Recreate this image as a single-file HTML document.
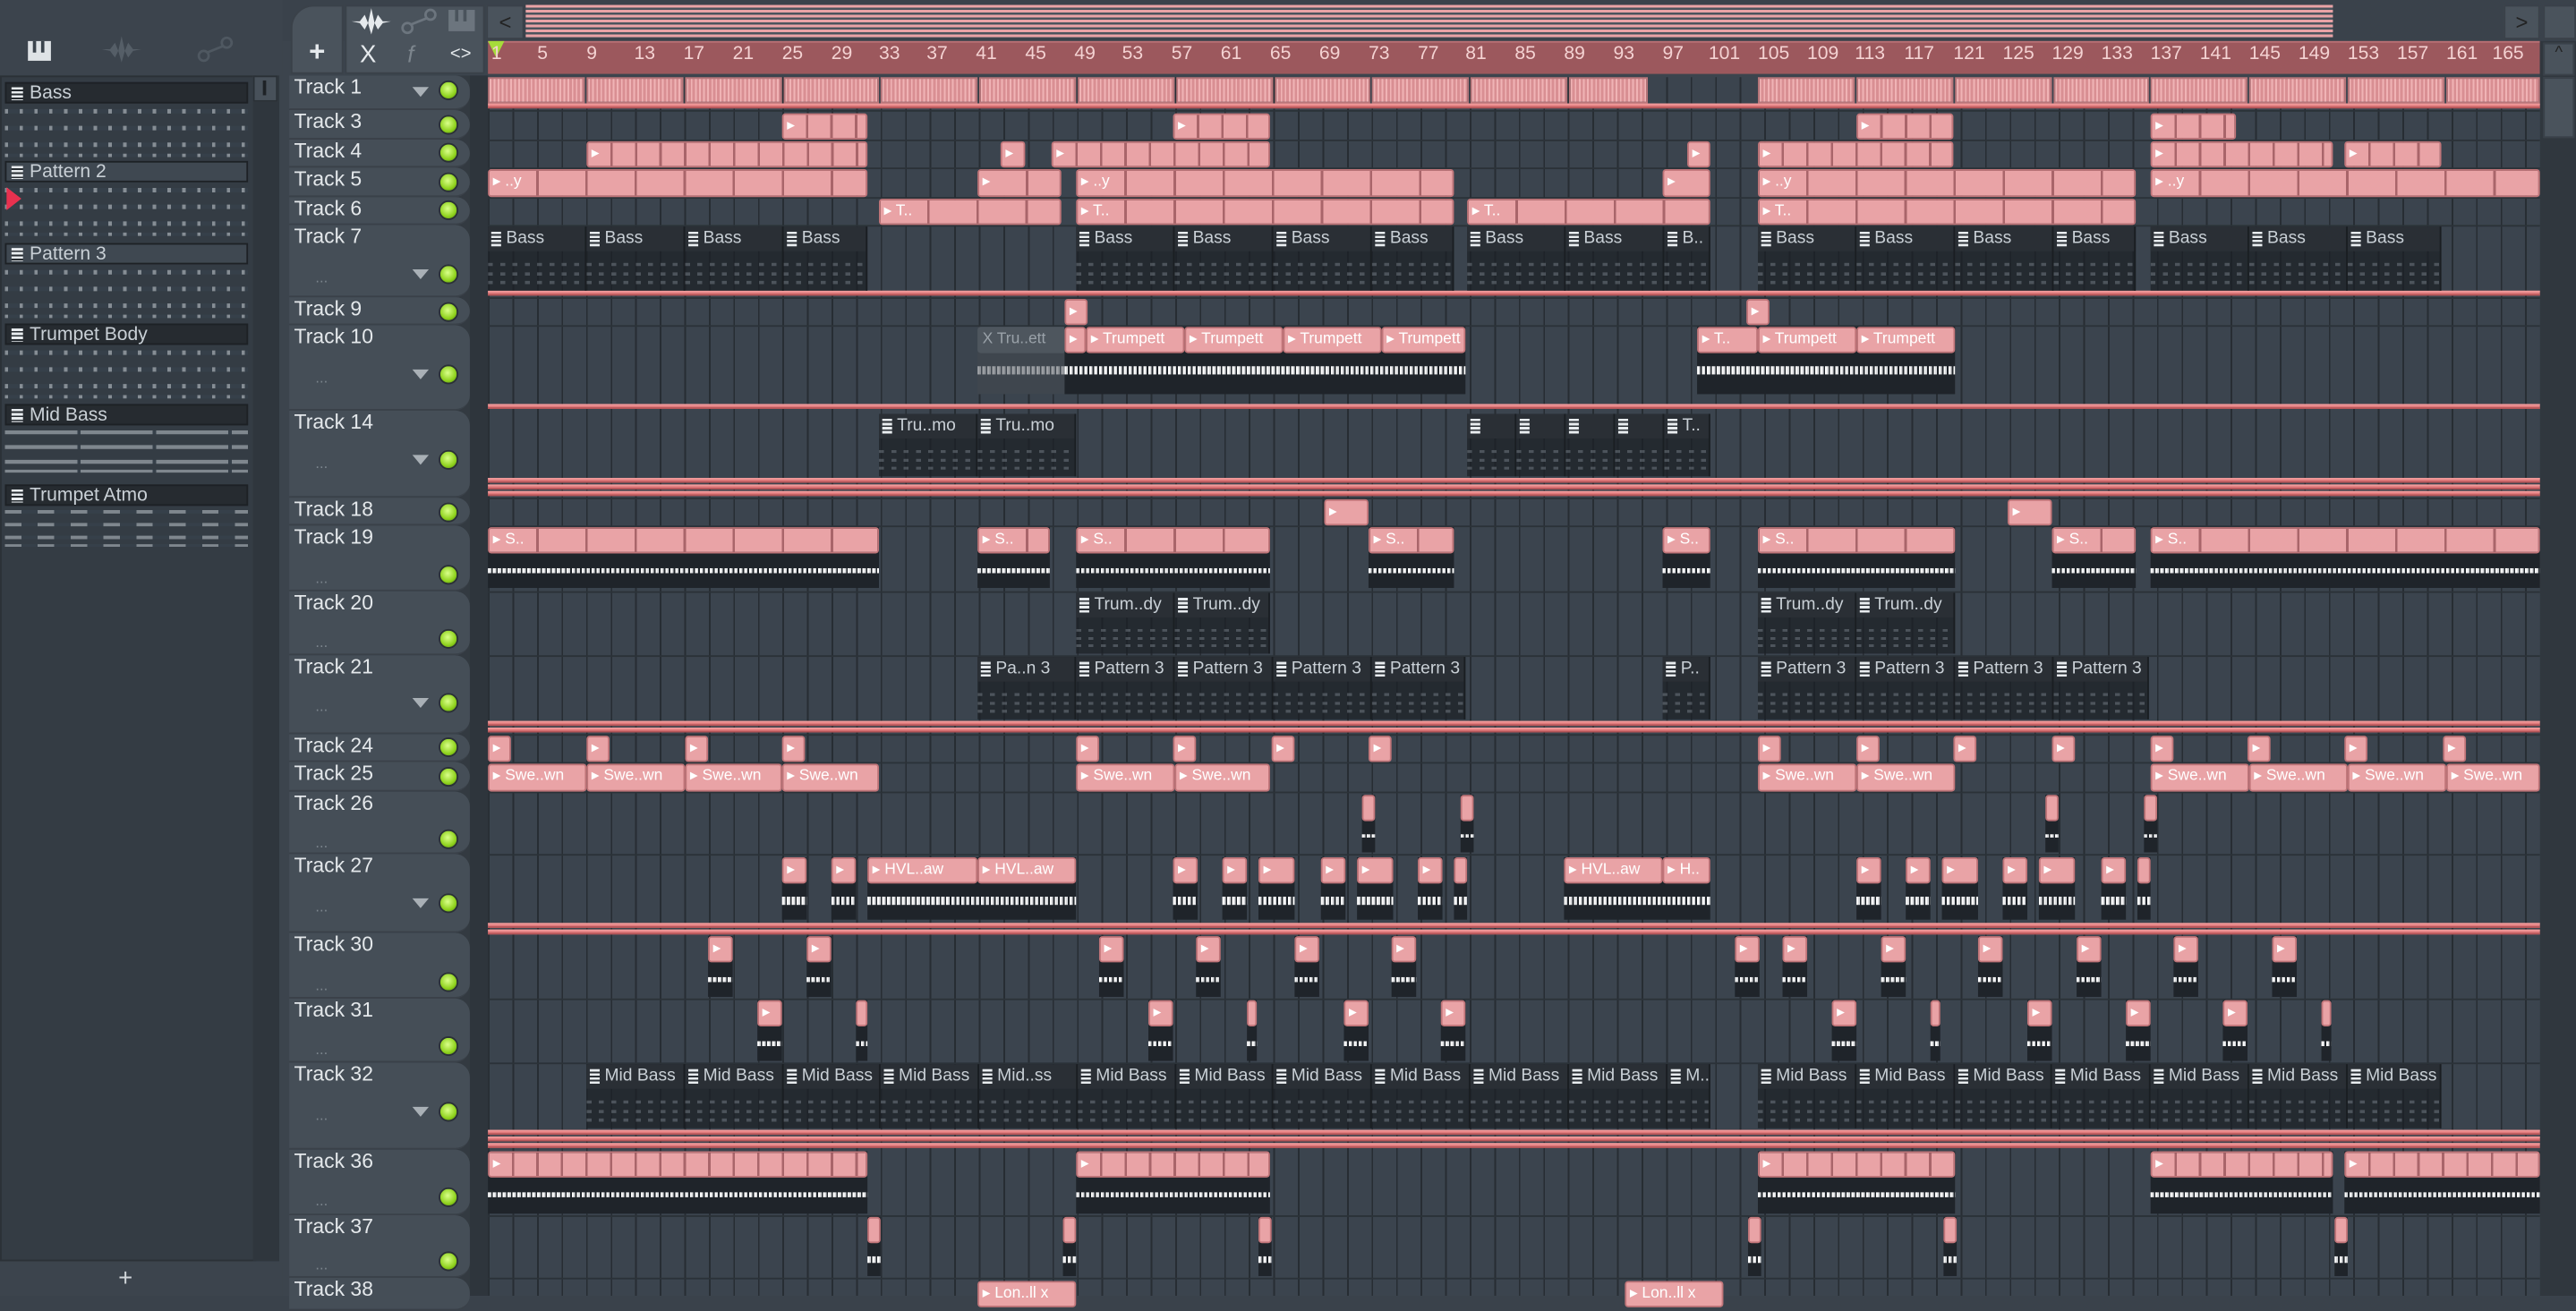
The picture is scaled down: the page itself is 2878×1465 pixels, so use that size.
<!DOCTYPE html>
<html><head><meta charset="utf-8">
<style>
*{margin:0;padding:0;box-sizing:border-box}
html,body{width:2878px;height:1448px;overflow:hidden;background:#3a424b}
#r{position:absolute;left:0;top:0;width:1568px;height:789px;transform:scale(1.8355,1.8352);transform-origin:0 0;background:#3c444d;font-family:"Liberation Sans Narrow","Liberation Sans",sans-serif;color:#dfe3e6}
.ab{position:absolute}
#grid{position:absolute;left:297px;top:47px;width:1249px;height:742px;background:#3b444e;
 background-image:repeating-linear-gradient(90deg,#272d33 0 1px,transparent 1px 14.94px);}
.row{position:absolute;left:297px;width:1249px;height:1px;background:#2b3238}
.red{position:absolute;left:297px;width:1249px;height:3px;background:#e07b7d;border-top:1px solid #f09a9a;border-bottom:1px solid #b55558}
.th{position:absolute;left:176px;width:110px;background:#454e57;border-radius:0 9px 9px 0;border-bottom:1px solid #3a4149}
.th span{position:absolute;left:3px;top:0;font-size:12.5px;color:#e4e8eb}
.dot{position:absolute;left:267px;width:12px;height:12px;border-radius:50%;background:radial-gradient(circle at 45% 40%,#d9ff8a,#8fd21d 60%,#4a7d0f);border:1.5px solid #2a3036}
.tri{position:absolute;left:251px;width:0;height:0;border-left:5px solid transparent;border-right:5px solid transparent;border-top:6px solid #a9b0b6}
.dd{position:absolute;left:192px;font-size:9px;color:#7c858d}
.p{position:absolute;background:#e9a3a6;border:1px solid #c07579;border-radius:2px;color:#fff;font-size:9.5px;line-height:13px;overflow:hidden;white-space:nowrap;padding-left:2px}
.r15{background:repeating-linear-gradient(90deg,#e9a3a6 0 13.5px,#a9656a 13.5px 14.94px)!important}
.r30{background:repeating-linear-gradient(90deg,#e9a3a6 0 28.4px,#a9656a 28.4px 29.88px)!important}
.r60{background:repeating-linear-gradient(90deg,#e9a3a6 0 58.3px,#a9656a 58.3px 59.76px)!important}
.q{position:absolute;background:rgba(28,32,37,.72);overflow:hidden;white-space:nowrap;border-right:1px solid #1a1e22}
.q b{display:block;height:15px;background:#2a2f35;font-weight:normal;font-size:10.5px;line-height:15px;color:#c9d0d6;padding-left:11px;position:relative}
.q b:before{content:"";position:absolute;left:2px;top:3px;width:6px;height:9px;background:repeating-linear-gradient(#e8ecef 0 1.5px,#2a2f35 1.5px 2.5px)}
.qn{position:absolute;left:0;right:0;top:22px;bottom:4px;background:repeating-linear-gradient(90deg,rgba(160,170,180,.55) 0 3px,transparent 3px 7.5px);opacity:.6;clip-path:polygon(0 0,100% 0,100% 15%,0 15%,0 45%,100% 45%,100% 60%,0 60%,0 85%,100% 85%,100% 100%,0 100%)}
.au{position:absolute;background:#1f242a}
.au b{position:absolute;left:0;right:0;top:0;height:16px;background:#e9a3a6;border:1px solid #c07579;border-radius:2px;font-weight:normal;color:#fff;font-size:9.5px;line-height:13px;padding-left:2px;overflow:hidden;white-space:nowrap}
.au s{position:absolute;left:0;right:0;height:5px;background:repeating-linear-gradient(90deg,#fff 0 1px,#d8dadc 1px 2px,transparent 2px 3px)}
.lp{position:absolute;left:3px;width:148px;height:13px;background:#262b30;border:1px solid #1d2125;font-size:11.5px;line-height:12px;color:#c9d0d6;padding-left:14px}
.lp:before{content:"";position:absolute;left:3px;top:2px;width:7px;height:8px;background:repeating-linear-gradient(#e8ecef 0 1.5px,#262b30 1.5px 2.5px)}
.ln{position:absolute;left:3px;width:148px;height:34px;background:#36404a;background-image:repeating-linear-gradient(90deg,rgba(200,205,210,.55) 0 2px,transparent 2px 9px);clip-path:polygon(0 10%,100% 10%,100% 18%,0 18%,0 40%,100% 40%,100% 48%,0 48%,0 70%,100% 70%,100% 78%,0 78%,0 90%,100% 90%,100% 96%,0 96%)}
.ru{position:absolute;top:27px;font-size:11.5px;color:#f4d2d2}
.t1{position:absolute;top:47px;height:16px;border:1px solid #b9767a;background:repeating-linear-gradient(90deg,#f0b3b5 0 1px,#d98f93 1px 2.5px)}
</style></head><body><div id="r">

<div class="ab" style="left:0;top:0;width:172px;height:46px;background:#3c444d"></div>
<div class="ab" style="left:17px;top:25px;width:14px;height:12px;background:#dfe3e6"></div>
<div class="ab" style="left:20px;top:25px;width:2px;height:7px;background:#3c444d"></div>
<div class="ab" style="left:25px;top:25px;width:2px;height:7px;background:#3c444d"></div>
<svg class="ab" style="left:62px;top:22px" width="24" height="16"><path d="M0 8 L5 8 L8 4 L10 9 L12 0 L14 9 L16 4 L19 8 L24 8 L19 9 L16 13 L14 9 L12 16 L10 9 L8 13 L5 9Z" fill="#555e67"/></svg>
<svg class="ab" style="left:120px;top:22px" width="22" height="16"><circle cx="4" cy="12" r="3" fill="none" stroke="#4f5861" stroke-width="1.5"/><circle cx="18" cy="4" r="3" fill="none" stroke="#4f5861" stroke-width="1.5"/><path d="M6 10L16 6" stroke="#4f5861" stroke-width="1.5"/></svg>

<div class="ab" style="left:0;top:46px;width:156px;height:722px;background:#343c44;border:1px solid #2b3137"></div>
<div class="ab" style="left:154px;top:46px;width:16px;height:722px;background:#2f363d"></div>
<div class="ab" style="left:154px;top:46px;width:15px;height:16px;background:#48515a;border:1px solid #2a3036"></div>
<div class="ab" style="left:160px;top:49px;width:2px;height:9px;background:#1e2226"></div>
<div class="lp" style="top:50px">Bass</div><div class="ln" style="top:63px"></div>
<div class="lp" style="top:98px;background:#3f4851">Pattern 2</div><div class="ln" style="top:111px"></div>
<div class="ab" style="left:4px;top:114px;width:0;height:0;border-top:7px solid transparent;border-bottom:7px solid transparent;border-left:9px solid #e8314f"></div>
<div class="lp" style="top:148px;background:#3f4851">Pattern 3</div><div class="ln" style="top:161px"></div>
<div class="lp" style="top:197px">Trumpet Body</div><div class="ln" style="top:210px"></div>
<div class="lp" style="top:246px">Mid Bass</div><div class="ln" style="top:259px;height:30px;background-image:repeating-linear-gradient(90deg,rgba(200,205,210,.5) 0 44px,transparent 44px 46px)"></div>
<div class="lp" style="top:295px">Trumpet Atmo</div><div class="ln" style="top:308px;height:26px;background-image:repeating-linear-gradient(90deg,rgba(200,205,210,.5) 0 10px,transparent 10px 20px)"></div>
<div class="ab" style="left:0;top:769px;width:172px;height:20px;background:#3c444d"></div>
<div class="ab" style="left:72px;top:770px;font-size:15px;color:#d0d5d9">+</div>

<div class="ab" style="left:172px;top:0;width:1396px;height:25px;background:#3a424b"></div>
<div class="ab" style="left:177px;top:3px;width:32px;height:42px;background:#4a535c;border:1px solid #3a4149;border-radius:14px 0 0 0"></div>
<div class="ab" style="left:188px;top:22px;font-size:17px;font-weight:bold;color:#e6eaed">+</div>
<div class="ab" style="left:210px;top:3px;width:85px;height:42px;background:#4a535c;border:1px solid #3a4149"></div>
<svg class="ab" style="left:214px;top:5px" width="24" height="16"><path d="M0 8 L5 8 L8 4 L10 9 L12 0 L14 9 L16 4 L19 8 L24 8 L19 9 L16 13 L14 9 L12 16 L10 9 L8 13 L5 9Z" fill="#e6eaed"/></svg>
<svg class="ab" style="left:244px;top:5px" width="22" height="16"><circle cx="4" cy="12" r="3" fill="none" stroke="#6c757e" stroke-width="1.5"/><circle cx="18" cy="4" r="3" fill="none" stroke="#6c757e" stroke-width="1.5"/><path d="M6 10L16 6" stroke="#6c757e" stroke-width="1.5"/></svg>
<div class="ab" style="left:273px;top:6px;width:16px;height:13px;background:#6c757e"></div>
<div class="ab" style="left:277px;top:6px;width:2px;height:7px;background:#4a535c"></div><div class="ab" style="left:282px;top:6px;width:2px;height:7px;background:#4a535c"></div>
<div class="ab" style="left:219px;top:25px;font-size:15px;color:#e6eaed">X</div>
<div class="ab" style="left:248px;top:25px;font-size:14px;color:#7c858d;font-style:italic">f</div>
<div class="ab" style="left:274px;top:27px;font-size:11px;color:#e6eaed">&lt;&gt;</div>
<div class="ab" style="left:296px;top:3px;width:23px;height:21px;background:#4a535c;border:1px solid #3a4149;color:#222;font-size:13px;text-align:center;line-height:19px">&lt;</div>
<div class="ab" style="left:320px;top:3px;width:1100px;height:20px;background:#4b545d;background-image:repeating-linear-gradient(#e9a3a6 0 1.5px,transparent 1.5px 3px)"></div>
<div class="ab" style="left:1524px;top:3px;width:22px;height:21px;background:#4a535c;border:1px solid #3a4149;color:#222;font-size:13px;text-align:center;line-height:19px">&gt;</div>
<div class="ab" style="left:1548px;top:3px;width:20px;height:21px;background:#4a535c;border:1px solid #3a4149"></div>

<div class="ab" style="left:297px;top:25px;width:1249px;height:20px;background:#9c585d;border-top:1px solid #b87074"></div>
<div class="ab" style="left:297px;top:25px;width:0;height:0;border-left:5px solid transparent;border-right:5px solid transparent;border-top:10px solid #a6dc3a"></div>
<div class="ru" style="left:299px">1</div><div class="ru" style="left:327px">5</div><div class="ru" style="left:357px">9</div><div class="ru" style="left:386px">13</div><div class="ru" style="left:416px">17</div><div class="ru" style="left:446px">21</div><div class="ru" style="left:476px">25</div><div class="ru" style="left:506px">29</div><div class="ru" style="left:535px">33</div><div class="ru" style="left:564px">37</div><div class="ru" style="left:594px">41</div><div class="ru" style="left:624px">45</div><div class="ru" style="left:654px">49</div><div class="ru" style="left:683px">53</div><div class="ru" style="left:713px">57</div><div class="ru" style="left:743px">61</div><div class="ru" style="left:773px">65</div><div class="ru" style="left:803px">69</div><div class="ru" style="left:833px">73</div><div class="ru" style="left:863px">77</div><div class="ru" style="left:892px">81</div><div class="ru" style="left:922px">85</div><div class="ru" style="left:952px">89</div><div class="ru" style="left:982px">93</div><div class="ru" style="left:1012px">97</div><div class="ru" style="left:1040px">101</div><div class="ru" style="left:1070px">105</div><div class="ru" style="left:1100px">109</div><div class="ru" style="left:1129px">113</div><div class="ru" style="left:1159px">117</div><div class="ru" style="left:1189px">121</div><div class="ru" style="left:1219px">125</div><div class="ru" style="left:1249px">129</div><div class="ru" style="left:1279px">133</div><div class="ru" style="left:1309px">137</div><div class="ru" style="left:1339px">141</div><div class="ru" style="left:1369px">145</div><div class="ru" style="left:1399px">149</div><div class="ru" style="left:1429px">153</div><div class="ru" style="left:1459px">157</div><div class="ru" style="left:1489px">161</div><div class="ru" style="left:1517px">165</div>

<div class="ab" style="left:1546px;top:25px;width:22px;height:764px;background:#30373e"></div>
<div class="ab" style="left:1548px;top:26px;width:19px;height:20px;background:#4a535c;border:1px solid #3a4149;font-size:10px;text-align:center;color:#222">^</div>
<div class="ab" style="left:1548px;top:47px;width:19px;height:37px;background:#4a535c;border:1px solid #3a4149"></div>

<div class="ab" style="left:176px;top:46px;width:121px;height:743px;background:#333a41"></div>
<div class="ab" style="left:286px;top:46px;width:11px;height:743px;background:#2e353c"></div>

<div id="grid"></div>
<div class="row" style="top:67px"></div><div class="row" style="top:85px"></div><div class="row" style="top:102px"></div><div class="row" style="top:120px"></div><div class="row" style="top:137px"></div><div class="row" style="top:181px"></div><div class="row" style="top:198px"></div><div class="row" style="top:303px"></div><div class="row" style="top:320px"></div><div class="row" style="top:360px"></div><div class="row" style="top:399px"></div><div class="row" style="top:447px"></div><div class="row" style="top:464px"></div><div class="row" style="top:482px"></div><div class="row" style="top:520px"></div><div class="row" style="top:608px"></div><div class="row" style="top:647px"></div><div class="row" style="top:740px"></div><div class="row" style="top:778px"></div>
<div class="red" style="top:63px"></div>
<div class="red" style="top:177px"></div>
<div class="red" style="top:246px"></div>
<div class="red" style="top:291px"></div><div class="red" style="top:295px"></div><div class="red" style="top:299px"></div>
<div class="red" style="top:439px"></div><div class="red" style="top:443px"></div>
<div class="red" style="top:562px"></div><div class="red" style="top:566px"></div>
<div class="red" style="top:688px"></div><div class="red" style="top:692px"></div><div class="red" style="top:696px"></div>

<div class="th" style="top:46px;height:21px"><span>Track 1</span></div><div class="tri" style="top:53px"></div><div class="dot" style="top:49px"></div>
<div class="th" style="top:67px;height:18px"><span>Track 3</span></div><div class="dot" style="top:70px"></div>
<div class="th" style="top:85px;height:17px"><span>Track 4</span></div><div class="dot" style="top:87px"></div>
<div class="th" style="top:102px;height:18px"><span>Track 5</span></div><div class="dot" style="top:105px"></div>
<div class="th" style="top:120px;height:17px"><span>Track 6</span></div><div class="dot" style="top:122px"></div>
<div class="th" style="top:137px;height:44px"><span>Track 7</span></div><div class="tri" style="top:164px"></div><div class="dd" style="top:164px">...</div><div class="dot" style="top:161px"></div>
<div class="th" style="top:181px;height:17px"><span>Track 9</span></div><div class="dot" style="top:184px"></div>
<div class="th" style="top:198px;height:52px"><span>Track 10</span></div><div class="tri" style="top:225px"></div><div class="dd" style="top:225px">...</div><div class="dot" style="top:222px"></div>
<div class="th" style="top:250px;height:53px"><span>Track 14</span></div><div class="tri" style="top:277px"></div><div class="dd" style="top:277px">...</div><div class="dot" style="top:274px"></div>
<div class="th" style="top:303px;height:17px"><span>Track 18</span></div><div class="dot" style="top:306px"></div>
<div class="th" style="top:320px;height:40px"><span>Track 19</span></div><div class="dd" style="top:347px">...</div><div class="dot" style="top:344px"></div>
<div class="th" style="top:360px;height:39px"><span>Track 20</span></div><div class="dd" style="top:386px">...</div><div class="dot" style="top:383px"></div>
<div class="th" style="top:399px;height:48px"><span>Track 21</span></div><div class="tri" style="top:425px"></div><div class="dd" style="top:425px">...</div><div class="dot" style="top:422px"></div>
<div class="th" style="top:447px;height:17px"><span>Track 24</span></div><div class="dot" style="top:449px"></div>
<div class="th" style="top:464px;height:18px"><span>Track 25</span></div><div class="dot" style="top:467px"></div>
<div class="th" style="top:482px;height:38px"><span>Track 26</span></div><div class="dd" style="top:508px">...</div><div class="dot" style="top:505px"></div>
<div class="th" style="top:520px;height:48px"><span>Track 27</span></div><div class="tri" style="top:547px"></div><div class="dd" style="top:547px">...</div><div class="dot" style="top:544px"></div>
<div class="th" style="top:568px;height:40px"><span>Track 30</span></div><div class="dd" style="top:595px">...</div><div class="dot" style="top:592px"></div>
<div class="th" style="top:608px;height:39px"><span>Track 31</span></div><div class="dd" style="top:634px">...</div><div class="dot" style="top:631px"></div>
<div class="th" style="top:647px;height:53px"><span>Track 32</span></div><div class="tri" style="top:674px"></div><div class="dd" style="top:674px">...</div><div class="dot" style="top:671px"></div>
<div class="th" style="top:700px;height:40px"><span>Track 36</span></div><div class="dd" style="top:726px">...</div><div class="dot" style="top:723px"></div>
<div class="th" style="top:740px;height:38px"><span>Track 37</span></div><div class="dd" style="top:765px">...</div><div class="dot" style="top:762px"></div>
<div class="th" style="top:778px;height:20px"><span>Track 38</span></div>

<!-- Track 1 -->
<div class="t1" style="left:297px;width:59px"></div><div class="t1" style="left:357px;width:59px"></div><div class="t1" style="left:417px;width:59px"></div><div class="t1" style="left:477px;width:58px"></div><div class="t1" style="left:536px;width:59px"></div><div class="t1" style="left:596px;width:59px"></div><div class="t1" style="left:656px;width:59px"></div><div class="t1" style="left:716px;width:59px"></div><div class="t1" style="left:776px;width:58px"></div><div class="t1" style="left:835px;width:59px"></div><div class="t1" style="left:895px;width:59px"></div><div class="t1" style="left:955px;width:48px"></div>
<div class="t1" style="left:1070px;width:59px"></div><div class="t1" style="left:1130px;width:59px"></div><div class="t1" style="left:1190px;width:59px"></div><div class="t1" style="left:1250px;width:58px"></div><div class="t1" style="left:1309px;width:59px"></div><div class="t1" style="left:1369px;width:59px"></div><div class="t1" style="left:1429px;width:59px"></div><div class="t1" style="left:1489px;width:57px"></div>

<!-- Track 3 -->
<div class="p r15" style="left:476px;top:69px;width:52px;height:16px">▸</div>
<div class="p r15" style="left:714px;top:69px;width:59px;height:16px">▸</div>
<div class="p r15" style="left:1130px;top:69px;width:59px;height:16px">▸</div>
<div class="p r15" style="left:1309px;top:69px;width:52px;height:16px">▸</div>
<!-- Track 4 -->
<div class="p r15" style="left:357px;top:86px;width:171px;height:16px">▸</div>
<div class="p" style="left:609px;top:86px;width:15px;height:16px">▸</div>
<div class="p r15" style="left:640px;top:86px;width:133px;height:16px">▸</div>
<div class="p" style="left:1027px;top:86px;width:14px;height:16px">▸</div>
<div class="p r15" style="left:1070px;top:86px;width:119px;height:16px">▸</div>
<div class="p r15" style="left:1309px;top:86px;width:111px;height:16px">▸</div>
<div class="p r15" style="left:1427px;top:86px;width:59px;height:16px">▸</div>
<!-- Track 5 -->
<div class="p r30" style="left:297px;top:103px;width:231px;height:17px">▸ ..y</div>
<div class="p r30" style="left:595px;top:103px;width:51px;height:17px">▸</div>
<div class="p r30" style="left:655px;top:103px;width:230px;height:17px">▸ ..y</div>
<div class="p" style="left:1012px;top:103px;width:29px;height:17px">▸</div>
<div class="p r30" style="left:1070px;top:103px;width:230px;height:17px">▸ ..y</div>
<div class="p r30" style="left:1309px;top:103px;width:237px;height:17px">▸ ..y</div>
<!-- Track 6 -->
<div class="p r30" style="left:535px;top:121px;width:111px;height:16px">▸ T..</div>
<div class="p r30" style="left:655px;top:121px;width:230px;height:16px">▸ T..</div>
<div class="p r30" style="left:893px;top:121px;width:148px;height:16px">▸ T..</div>
<div class="p r30" style="left:1070px;top:121px;width:230px;height:16px">▸ T..</div>
<!-- Track 7 -->
<div class="q" style="left:297px;top:138px;width:60px;height:39px"><b>Bass</b><i class="qn"></i></div><div class="q" style="left:357px;top:138px;width:60px;height:39px"><b>Bass</b><i class="qn"></i></div><div class="q" style="left:417px;top:138px;width:60px;height:39px"><b>Bass</b><i class="qn"></i></div><div class="q" style="left:477px;top:138px;width:51px;height:39px"><b>Bass</b><i class="qn"></i></div>
<div class="q" style="left:655px;top:138px;width:60px;height:39px"><b>Bass</b><i class="qn"></i></div><div class="q" style="left:715px;top:138px;width:60px;height:39px"><b>Bass</b><i class="qn"></i></div><div class="q" style="left:775px;top:138px;width:60px;height:39px"><b>Bass</b><i class="qn"></i></div><div class="q" style="left:835px;top:138px;width:50px;height:39px"><b>Bass</b><i class="qn"></i></div>
<div class="q" style="left:893px;top:138px;width:60px;height:39px"><b>Bass</b><i class="qn"></i></div><div class="q" style="left:953px;top:138px;width:60px;height:39px"><b>Bass</b><i class="qn"></i></div><div class="q" style="left:1013px;top:138px;width:28px;height:39px"><b>B..</b><i class="qn"></i></div>
<div class="q" style="left:1070px;top:138px;width:60px;height:39px"><b>Bass</b><i class="qn"></i></div><div class="q" style="left:1130px;top:138px;width:60px;height:39px"><b>Bass</b><i class="qn"></i></div><div class="q" style="left:1190px;top:138px;width:60px;height:39px"><b>Bass</b><i class="qn"></i></div><div class="q" style="left:1250px;top:138px;width:50px;height:39px"><b>Bass</b><i class="qn"></i></div>
<div class="q" style="left:1309px;top:138px;width:60px;height:39px"><b>Bass</b><i class="qn"></i></div><div class="q" style="left:1369px;top:138px;width:60px;height:39px"><b>Bass</b><i class="qn"></i></div><div class="q" style="left:1429px;top:138px;width:57px;height:39px"><b>Bass</b><i class="qn"></i></div>
<!-- Track 9 -->
<div class="p" style="left:648px;top:182px;width:14px;height:16px">▸</div>
<div class="p" style="left:1063px;top:182px;width:14px;height:16px">▸</div>
<!-- Track 10 -->
<div class="au" style="left:595px;top:199px;width:54px;height:41px;background:#3f464e"><b style="background:#4e565e;border-color:#4e565e;color:#9aa2a9">X Tru..ett</b><s style="top:24px;opacity:.5"></s></div>
<div class="au" style="left:648px;top:199px;width:244px;height:41px"><s style="top:24px"></s></div>
<div class="p" style="left:648px;top:199px;width:13px;height:16px">▸</div>
<div class="p" style="left:661px;top:199px;width:60px;height:16px">▸ Trumpett</div><div class="p" style="left:721px;top:199px;width:60px;height:16px">▸ Trumpett</div><div class="p" style="left:781px;top:199px;width:60px;height:16px">▸ Trumpett</div><div class="p" style="left:841px;top:199px;width:51px;height:16px">▸ Trumpett</div>
<div class="au" style="left:1033px;top:199px;width:157px;height:41px"><s style="top:24px"></s></div>
<div class="p" style="left:1033px;top:199px;width:37px;height:16px">▸ T..</div><div class="p" style="left:1070px;top:199px;width:60px;height:16px">▸ Trumpett</div><div class="p" style="left:1130px;top:199px;width:60px;height:16px">▸ Trumpett</div>
<!-- Track 14 -->
<div class="q" style="left:535px;top:252px;width:60px;height:38px"><b>Tru..mo</b><i class="qn"></i></div><div class="q" style="left:595px;top:252px;width:60px;height:38px"><b>Tru..mo</b><i class="qn"></i></div>
<div class="q" style="left:893px;top:252px;width:30px;height:38px"><b></b><i class="qn"></i></div><div class="q" style="left:923px;top:252px;width:30px;height:38px"><b></b><i class="qn"></i></div><div class="q" style="left:953px;top:252px;width:30px;height:38px"><b></b><i class="qn"></i></div><div class="q" style="left:983px;top:252px;width:30px;height:38px"><b></b><i class="qn"></i></div><div class="q" style="left:1013px;top:252px;width:28px;height:38px"><b>T..</b><i class="qn"></i></div>
<!-- Track 18 -->
<div class="p" style="left:806px;top:304px;width:27px;height:16px">▸</div>
<div class="p" style="left:1222px;top:304px;width:27px;height:16px">▸</div>
<!-- Track 19 -->
<div class="au" style="left:297px;top:321px;width:238px;height:37px"><b class="r30">▸ S..</b><s style="top:25px;height:3px"></s></div>
<div class="au" style="left:595px;top:321px;width:44px;height:37px"><b class="r30">▸ S..</b><s style="top:25px;height:3px"></s></div>
<div class="au" style="left:655px;top:321px;width:118px;height:37px"><b class="r30">▸ S..</b><s style="top:25px;height:3px"></s></div>
<div class="au" style="left:833px;top:321px;width:52px;height:37px"><b class="r30">▸ S..</b><s style="top:25px;height:3px"></s></div>
<div class="au" style="left:1012px;top:321px;width:29px;height:37px"><b>▸ S..</b><s style="top:25px;height:3px"></s></div>
<div class="au" style="left:1070px;top:321px;width:120px;height:37px"><b class="r30">▸ S..</b><s style="top:25px;height:3px"></s></div>
<div class="au" style="left:1249px;top:321px;width:51px;height:37px"><b class="r30">▸ S..</b><s style="top:25px;height:3px"></s></div>
<div class="au" style="left:1309px;top:321px;width:237px;height:37px"><b class="r30">▸ S..</b><s style="top:25px;height:3px"></s></div>
<!-- Track 20 -->
<div class="q" style="left:655px;top:361px;width:60px;height:37px"><b>Trum..dy</b><i class="qn"></i></div><div class="q" style="left:715px;top:361px;width:58px;height:37px"><b>Trum..dy</b><i class="qn"></i></div>
<div class="q" style="left:1070px;top:361px;width:60px;height:37px"><b>Trum..dy</b><i class="qn"></i></div><div class="q" style="left:1130px;top:361px;width:60px;height:37px"><b>Trum..dy</b><i class="qn"></i></div>
<!-- Track 21 -->
<div class="q" style="left:595px;top:400px;width:60px;height:38px"><b>Pa..n 3</b><i class="qn"></i></div><div class="q" style="left:655px;top:400px;width:60px;height:38px"><b>Pattern 3</b><i class="qn"></i></div><div class="q" style="left:715px;top:400px;width:60px;height:38px"><b>Pattern 3</b><i class="qn"></i></div><div class="q" style="left:775px;top:400px;width:60px;height:38px"><b>Pattern 3</b><i class="qn"></i></div><div class="q" style="left:835px;top:400px;width:57px;height:38px"><b>Pattern 3</b><i class="qn"></i></div>
<div class="q" style="left:1012px;top:400px;width:29px;height:38px"><b>P..</b><i class="qn"></i></div>
<div class="q" style="left:1070px;top:400px;width:60px;height:38px"><b>Pattern 3</b><i class="qn"></i></div><div class="q" style="left:1130px;top:400px;width:60px;height:38px"><b>Pattern 3</b><i class="qn"></i></div><div class="q" style="left:1190px;top:400px;width:60px;height:38px"><b>Pattern 3</b><i class="qn"></i></div><div class="q" style="left:1250px;top:400px;width:58px;height:38px"><b>Pattern 3</b><i class="qn"></i></div>
<!-- Track 24 -->
<div class="p" style="left:297px;top:448px;width:14px;height:16px">▸</div><div class="p" style="left:357px;top:448px;width:14px;height:16px">▸</div><div class="p" style="left:417px;top:448px;width:14px;height:16px">▸</div><div class="p" style="left:476px;top:448px;width:14px;height:16px">▸</div><div class="p" style="left:655px;top:448px;width:14px;height:16px">▸</div><div class="p" style="left:714px;top:448px;width:14px;height:16px">▸</div><div class="p" style="left:774px;top:448px;width:14px;height:16px">▸</div><div class="p" style="left:833px;top:448px;width:14px;height:16px">▸</div><div class="p" style="left:1070px;top:448px;width:14px;height:16px">▸</div><div class="p" style="left:1130px;top:448px;width:14px;height:16px">▸</div><div class="p" style="left:1189px;top:448px;width:14px;height:16px">▸</div><div class="p" style="left:1249px;top:448px;width:14px;height:16px">▸</div><div class="p" style="left:1309px;top:448px;width:14px;height:16px">▸</div><div class="p" style="left:1368px;top:448px;width:14px;height:16px">▸</div><div class="p" style="left:1427px;top:448px;width:14px;height:16px">▸</div><div class="p" style="left:1487px;top:448px;width:14px;height:16px">▸</div>
<!-- Track 25 -->
<div class="p" style="left:297px;top:465px;width:60px;height:17px">▸ Swe..wn</div><div class="p" style="left:357px;top:465px;width:60px;height:17px">▸ Swe..wn</div><div class="p" style="left:417px;top:465px;width:59px;height:17px">▸ Swe..wn</div><div class="p" style="left:476px;top:465px;width:59px;height:17px">▸ Swe..wn</div>
<div class="p" style="left:655px;top:465px;width:60px;height:17px">▸ Swe..wn</div><div class="p" style="left:715px;top:465px;width:58px;height:17px">▸ Swe..wn</div>
<div class="p" style="left:1070px;top:465px;width:60px;height:17px">▸ Swe..wn</div><div class="p" style="left:1130px;top:465px;width:60px;height:17px">▸ Swe..wn</div>
<div class="p" style="left:1309px;top:465px;width:60px;height:17px">▸ Swe..wn</div><div class="p" style="left:1369px;top:465px;width:60px;height:17px">▸ Swe..wn</div><div class="p" style="left:1429px;top:465px;width:60px;height:17px">▸ Swe..wn</div><div class="p" style="left:1489px;top:465px;width:57px;height:17px">▸ Swe..wn</div>
<!-- Track 26 -->
<div class="au" style="left:829px;top:484px;width:8px;height:35px"><b></b><s style="top:24px;height:2px"></s></div>
<div class="au" style="left:889px;top:484px;width:8px;height:35px"><b></b><s style="top:24px;height:2px"></s></div>
<div class="au" style="left:1245px;top:484px;width:8px;height:35px"><b></b><s style="top:24px;height:2px"></s></div>
<div class="au" style="left:1305px;top:484px;width:8px;height:35px"><b></b><s style="top:24px;height:2px"></s></div>
<!-- Track 27 -->
<div class="au" style="left:476px;top:522px;width:15px;height:38px"><b>▸</b><s style="top:24px"></s></div>
<div class="au" style="left:506px;top:522px;width:15px;height:38px"><b>▸</b><s style="top:24px"></s></div>
<div class="au" style="left:528px;top:522px;width:127px;height:38px"><s style="top:24px"></s></div>
<div class="p" style="left:528px;top:522px;width:67px;height:16px">▸ HVL..aw</div><div class="p" style="left:595px;top:522px;width:60px;height:16px">▸ HVL..aw</div>
<div class="au" style="left:714px;top:522px;width:15px;height:38px"><b>▸</b><s style="top:24px"></s></div>
<div class="au" style="left:744px;top:522px;width:15px;height:38px"><b>▸</b><s style="top:24px"></s></div>
<div class="au" style="left:766px;top:522px;width:22px;height:38px"><b>▸</b><s style="top:24px"></s></div>
<div class="au" style="left:804px;top:522px;width:15px;height:38px"><b>▸</b><s style="top:24px"></s></div>
<div class="au" style="left:826px;top:522px;width:22px;height:38px"><b>▸</b><s style="top:24px"></s></div>
<div class="au" style="left:863px;top:522px;width:15px;height:38px"><b>▸</b><s style="top:24px"></s></div>
<div class="au" style="left:885px;top:522px;width:8px;height:38px"><b></b><s style="top:24px"></s></div>
<div class="au" style="left:952px;top:522px;width:89px;height:38px"><s style="top:24px"></s></div>
<div class="p" style="left:952px;top:522px;width:60px;height:16px">▸ HVL..aw</div><div class="p" style="left:1012px;top:522px;width:29px;height:16px">▸ H..</div>
<div class="au" style="left:1130px;top:522px;width:15px;height:38px"><b>▸</b><s style="top:24px"></s></div>
<div class="au" style="left:1160px;top:522px;width:15px;height:38px"><b>▸</b><s style="top:24px"></s></div>
<div class="au" style="left:1182px;top:522px;width:22px;height:38px"><b>▸</b><s style="top:24px"></s></div>
<div class="au" style="left:1219px;top:522px;width:15px;height:38px"><b>▸</b><s style="top:24px"></s></div>
<div class="au" style="left:1241px;top:522px;width:22px;height:38px"><b>▸</b><s style="top:24px"></s></div>
<div class="au" style="left:1279px;top:522px;width:15px;height:38px"><b>▸</b><s style="top:24px"></s></div>
<div class="au" style="left:1301px;top:522px;width:8px;height:38px"><b></b><s style="top:24px"></s></div>
<!-- Track 30 -->
<div class="au" style="left:431px;top:570px;width:15px;height:37px"><b>▸</b><s style="top:25px;height:3px"></s></div><div class="au" style="left:491px;top:570px;width:15px;height:37px"><b>▸</b><s style="top:25px;height:3px"></s></div><div class="au" style="left:669px;top:570px;width:15px;height:37px"><b>▸</b><s style="top:25px;height:3px"></s></div><div class="au" style="left:728px;top:570px;width:15px;height:37px"><b>▸</b><s style="top:25px;height:3px"></s></div><div class="au" style="left:788px;top:570px;width:15px;height:37px"><b>▸</b><s style="top:25px;height:3px"></s></div><div class="au" style="left:847px;top:570px;width:15px;height:37px"><b>▸</b><s style="top:25px;height:3px"></s></div><div class="au" style="left:1056px;top:570px;width:15px;height:37px"><b>▸</b><s style="top:25px;height:3px"></s></div><div class="au" style="left:1085px;top:570px;width:15px;height:37px"><b>▸</b><s style="top:25px;height:3px"></s></div><div class="au" style="left:1145px;top:570px;width:15px;height:37px"><b>▸</b><s style="top:25px;height:3px"></s></div><div class="au" style="left:1204px;top:570px;width:15px;height:37px"><b>▸</b><s style="top:25px;height:3px"></s></div><div class="au" style="left:1264px;top:570px;width:15px;height:37px"><b>▸</b><s style="top:25px;height:3px"></s></div><div class="au" style="left:1323px;top:570px;width:15px;height:37px"><b>▸</b><s style="top:25px;height:3px"></s></div><div class="au" style="left:1383px;top:570px;width:15px;height:37px"><b>▸</b><s style="top:25px;height:3px"></s></div>
<!-- Track 31 -->
<div class="au" style="left:461px;top:609px;width:15px;height:37px"><b>▸</b><s style="top:25px;height:3px"></s></div><div class="au" style="left:521px;top:609px;width:7px;height:37px"><b></b><s style="top:25px;height:3px"></s></div><div class="au" style="left:699px;top:609px;width:15px;height:37px"><b>▸</b><s style="top:25px;height:3px"></s></div><div class="au" style="left:759px;top:609px;width:6px;height:37px"><b></b><s style="top:25px;height:3px"></s></div><div class="au" style="left:818px;top:609px;width:15px;height:37px"><b>▸</b><s style="top:25px;height:3px"></s></div><div class="au" style="left:877px;top:609px;width:15px;height:37px"><b>▸</b><s style="top:25px;height:3px"></s></div><div class="au" style="left:1115px;top:609px;width:15px;height:37px"><b>▸</b><s style="top:25px;height:3px"></s></div><div class="au" style="left:1175px;top:609px;width:6px;height:37px"><b></b><s style="top:25px;height:3px"></s></div><div class="au" style="left:1234px;top:609px;width:15px;height:37px"><b>▸</b><s style="top:25px;height:3px"></s></div><div class="au" style="left:1294px;top:609px;width:15px;height:37px"><b>▸</b><s style="top:25px;height:3px"></s></div><div class="au" style="left:1353px;top:609px;width:15px;height:37px"><b>▸</b><s style="top:25px;height:3px"></s></div><div class="au" style="left:1413px;top:609px;width:6px;height:37px"><b></b><s style="top:25px;height:3px"></s></div>
<!-- Track 32 -->
<div class="q" style="left:357px;top:648px;width:60px;height:39px"><b>Mid Bass</b><i class="qn"></i></div><div class="q" style="left:417px;top:648px;width:60px;height:39px"><b>Mid Bass</b><i class="qn"></i></div><div class="q" style="left:477px;top:648px;width:59px;height:39px"><b>Mid Bass</b><i class="qn"></i></div><div class="q" style="left:536px;top:648px;width:60px;height:39px"><b>Mid Bass</b><i class="qn"></i></div><div class="q" style="left:596px;top:648px;width:60px;height:39px"><b>Mid..ss</b><i class="qn"></i></div><div class="q" style="left:656px;top:648px;width:60px;height:39px"><b>Mid Bass</b><i class="qn"></i></div><div class="q" style="left:716px;top:648px;width:59px;height:39px"><b>Mid Bass</b><i class="qn"></i></div><div class="q" style="left:775px;top:648px;width:60px;height:39px"><b>Mid Bass</b><i class="qn"></i></div><div class="q" style="left:835px;top:648px;width:60px;height:39px"><b>Mid Bass</b><i class="qn"></i></div><div class="q" style="left:895px;top:648px;width:60px;height:39px"><b>Mid Bass</b><i class="qn"></i></div><div class="q" style="left:955px;top:648px;width:60px;height:39px"><b>Mid Bass</b><i class="qn"></i></div><div class="q" style="left:1015px;top:648px;width:26px;height:39px"><b>M..</b><i class="qn"></i></div>
<div class="q" style="left:1070px;top:648px;width:60px;height:39px"><b>Mid Bass</b><i class="qn"></i></div><div class="q" style="left:1130px;top:648px;width:60px;height:39px"><b>Mid Bass</b><i class="qn"></i></div><div class="q" style="left:1190px;top:648px;width:59px;height:39px"><b>Mid Bass</b><i class="qn"></i></div><div class="q" style="left:1249px;top:648px;width:60px;height:39px"><b>Mid Bass</b><i class="qn"></i></div><div class="q" style="left:1309px;top:648px;width:60px;height:39px"><b>Mid Bass</b><i class="qn"></i></div><div class="q" style="left:1369px;top:648px;width:60px;height:39px"><b>Mid Bass</b><i class="qn"></i></div><div class="q" style="left:1429px;top:648px;width:57px;height:39px"><b>Mid Bass</b><i class="qn"></i></div>
<!-- Track 36 -->
<div class="au" style="left:297px;top:701px;width:231px;height:38px"><b class="r15">▸</b><s style="top:25px;height:3px"></s></div>
<div class="au" style="left:655px;top:701px;width:118px;height:38px"><b class="r15">▸</b><s style="top:25px;height:3px"></s></div>
<div class="au" style="left:1070px;top:701px;width:120px;height:38px"><b class="r15">▸</b><s style="top:25px;height:3px"></s></div>
<div class="au" style="left:1309px;top:701px;width:111px;height:38px"><b class="r15">▸</b><s style="top:25px;height:3px"></s></div>
<div class="au" style="left:1427px;top:701px;width:119px;height:38px"><b class="r15">▸</b><s style="top:25px;height:3px"></s></div>
<!-- Track 37 -->
<div class="au" style="left:528px;top:741px;width:8px;height:36px"><b></b><s style="top:24px;height:4px"></s></div><div class="au" style="left:647px;top:741px;width:8px;height:36px"><b></b><s style="top:24px;height:4px"></s></div><div class="au" style="left:766px;top:741px;width:8px;height:36px"><b></b><s style="top:24px;height:4px"></s></div><div class="au" style="left:1064px;top:741px;width:8px;height:36px"><b></b><s style="top:24px;height:4px"></s></div><div class="au" style="left:1183px;top:741px;width:8px;height:36px"><b></b><s style="top:24px;height:4px"></s></div><div class="au" style="left:1421px;top:741px;width:8px;height:36px"><b></b><s style="top:24px;height:4px"></s></div>
<!-- Track 38 -->
<div class="p" style="left:595px;top:780px;width:60px;height:16px">▸ Lon..ll x</div>
<div class="p" style="left:989px;top:780px;width:60px;height:16px">▸ Lon..ll x</div>

</div></body></html>
